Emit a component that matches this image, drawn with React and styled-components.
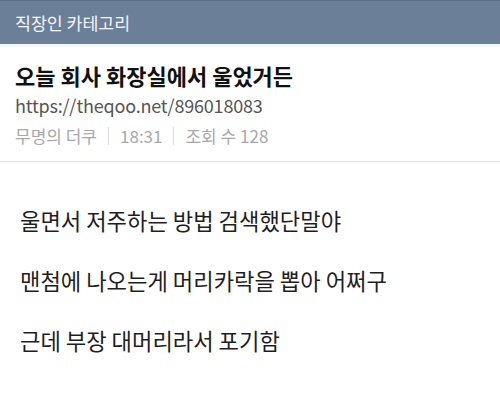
import styled, { createGlobalStyle } from 'styled-components'

const GlobalStyle = createGlobalStyle`
    body {
        margin: 0;
        background: #ffffff;
        font-family: "Noto Sans CJK KR", "Noto Sans", sans-serif;
    }
`

const post = {
    category: '직장인 카테고리',
    title: '오늘 회사 화장실에서 울었거든',
    url: 'https://theqoo.net/896018083',
    author: '무명의 더쿠',
    time: '18:31',
    views: 128,
    lines: [
        '울면서 저주하는 방법 검색했단말야',
        '맨첨에 나오는게 머리카락을 뽑아 어쩌구',
        '근데 부장 대머리라서 포기함',
    ],
}

const App = () => {
    return (
        <Page>
            <GlobalStyle />
            <CategoryBar>{post.category}</CategoryBar>

            <PostHeader>
                <Title>{post.title}</Title>
                <Link>{post.url}</Link>
                <Meta>
                    <span>{post.author}</span>
                    <Sep />
                    <span>{post.time}</span>
                    <Sep />
                    <span>조회 수 {post.views}</span>
                </Meta>
            </PostHeader>

            <Body>
                {post.lines.map(line => (
                    <Line key={line}>{line}</Line>
                ))}
            </Body>
        </Page>
    )
}

const Page = styled.div`
    width: 500px;
    height: 420px;
    overflow: hidden;
    background: #ffffff;
`

const CategoryBar = styled.div`
    height: 47px;
    display: flex;
    align-items: center;
    padding: 0 15px;
    background-color: #6b7f99;
    border-top: 1px solid #5d708a;
    box-sizing: border-box;
    color: #f4f6fa;
    font-size: 17.3px;
    border-bottom: 3px solid #f2f7fb;
`

const PostHeader = styled.div`
    padding: 12px 15px 0;
    height: 115px;
    box-sizing: border-box;
    border-bottom: 1px solid #e4e4e4;
`

const Title = styled.h1`
    margin: 0;
    font-size: 22px;
    font-weight: 700;
    color: #111111;
    line-height: 32px;
`

const Link = styled.div`
    font-size: 18px;
    color: #555555;
    line-height: 29px;
    letter-spacing: -0.2px;
`

const Meta = styled.div`
    display: flex;
    align-items: center;
    gap: 11px;
    font-size: 17px;
    color: #a8a8a8;
    line-height: 31px;
`

const Sep = styled.i`
    width: 1px;
    height: 18px;
    background: #dddddd;
`

const Body = styled.div`
    padding: 43px 20px 0;
    display: flex;
    flex-direction: column;
    gap: 30px;
`

const Line = styled.p`
    margin: 0;
    font-size: 22.2px;
    line-height: 30px;
    color: #1e1e1e;
`

export default App
